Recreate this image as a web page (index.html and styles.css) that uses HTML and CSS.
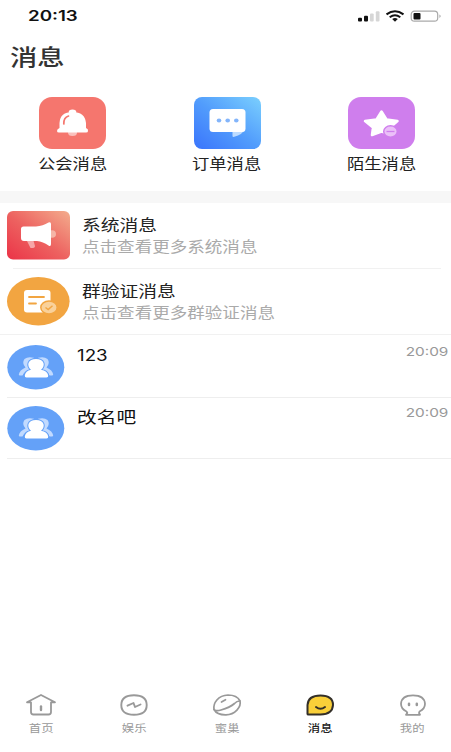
FILE: index.html
```html
<!DOCTYPE html>
<html lang="zh-CN">
<head>
<meta charset="utf-8">
<title>消息</title>
<link rel="stylesheet" href="styles.css">
</head>
<body>
<div class="app">
  <header class="status">
    <span class="wide clock">20:13</span>
    <svg class="signals" width="86" height="14" viewBox="0 0 86 14">
      <rect x="1" y="8.7" width="4" height="3.8" rx="1" fill="#111"/>
      <rect x="7" y="6.8" width="4" height="5.7" rx="1" fill="#111"/>
      <rect x="13" y="4.5" width="3.7" height="8" rx="1" fill="#d6d6d6"/>
      <rect x="18.8" y="2.2" width="3.7" height="10.3" rx="1" fill="#d6d6d6"/>
      <g fill="none" stroke="#111" stroke-width="2">
        <path d="M29.5 5.4Q38 -.8 46.5 5.4"/>
        <path d="M32.7 8.2Q38 4.2 43.3 8.2"/>
      </g>
      <path d="M35.2 9.9Q38 7.9 40.8 9.9L38 12.7Z" fill="#111"/>
      <rect x="54.2" y="2.2" width="26.5" height="10" rx="3.2" fill="#fff" stroke="#aaa" stroke-width="1.2"/>
      <rect x="56.5" y="4" width="7" height="6.5" rx="1" fill="#111"/>
      <path d="M82.5 5.5Q84.7 7.2 82.5 9Z" fill="#999"/>
    </svg>
  </header>
  <h1><span class="wide">消息</span></h1>
  <nav class="shortcuts">
    <a class="shortcut">
      <svg width="67" height="52" viewBox="0 0 67 52">
        <rect width="67" height="52" rx="13" fill="#f5766e"/>
        <ellipse cx="33.5" cy="15" rx="3.8" ry="2.5" fill="#fff"/>
        <ellipse cx="33.5" cy="35.5" rx="4.5" ry="3.5" fill="#fac1bd"/>
        <path d="M20.5 31V26Q21 15 33.5 15T47 26V31Q49.5 32 49 34Q49 35.5 47 35.5H20Q18 35.5 18 34Q18 32 20.5 31Z" fill="#fff"/>
        <path d="M24.8 27Q24.5 20.5 29.5 19" fill="none" stroke="#f5766e" stroke-width="1.7" stroke-linecap="round"/>
      </svg>
      <span class="wide">公会消息</span>
    </a>
    <a class="shortcut">
      <svg width="67" height="52" viewBox="0 0 67 52">
        <defs><linearGradient id="blue" x1="0" y1="1" x2="1" y2="0"><stop offset=".05" stop-color="#3c78fc"/><stop offset=".5" stop-color="#529dfc"/><stop offset="1" stop-color="#7bd0fe"/></linearGradient></defs>
        <rect width="67" height="52" rx="8" fill="url(#blue)"/>
        <path d="M38.5 32H51Q49.5 37 39.5 40Q38.5 40 38.5 39Z" fill="#bddcff"/>
        <rect x="15.5" y="12" width="36" height="23" rx="3.5" fill="#fff"/>
        <g fill="#83b5fb"><ellipse cx="25" cy="23.5" rx="2.3" ry="1.9"/><ellipse cx="33.7" cy="23.5" rx="2.3" ry="1.9"/><ellipse cx="42.3" cy="23.5" rx="2.3" ry="1.9"/></g>
      </svg>
      <span class="wide">订单消息</span>
    </a>
    <a class="shortcut">
      <svg width="67" height="52" viewBox="0 0 67 52">
        <rect width="67" height="52" rx="13" fill="#cf7eed"/>
        <path d="M33.5 14.5L38.5 22.5L49.5 24L42 30.5L41.5 37L33.5 34.5L24 38L25 30.5L17 24L28.5 22.5Z" fill="#fff" stroke="#fff" stroke-width="2.5" stroke-linejoin="round"/>
        <ellipse cx="42.5" cy="34.5" rx="6.8" ry="5.7" fill="#ebc0f8" stroke="#cf7eed" stroke-width="1.5"/>
        <path d="M38.5 34.5H46.5" stroke="#cf7eed" stroke-width="1.3"/>
      </svg>
      <span class="wide">陌生消息</span>
    </a>
  </nav>
  <div class="band"></div>
  <main>
    <section class="notice inset">
      <svg width="63" height="49" viewBox="0 0 63 49">
        <defs><linearGradient id="red" x1="0" y1="1" x2="1" y2="0"><stop offset="0" stop-color="#eb3347"/><stop offset=".48" stop-color="#ed6260"/><stop offset="1" stop-color="#f3ad8d"/></linearGradient></defs>
        <rect width="63" height="48.5" rx="6" fill="url(#red)"/>
        <ellipse cx="45" cy="23" rx="4" ry="3.8" fill="#f5b5a7"/>
        <path d="M19 28H26L28 35Q28 37.5 23.5 37Z" fill="#f6a7a8"/>
        <path d="M16.5 15.5H29Q36 15 41.5 11.5Q44 10.5 44 13V33Q44 36 41.5 34.5Q36 30.5 30 30H17Q14 30 14 27V18Q14 15.5 16.5 15.5Z" fill="#fff"/>
      </svg>
      <div class="copy"><h2><span class="wide">系统消息</span></h2><p><span class="wide">点击查看更多系统消息</span></p></div>
    </section>
    <section class="notice">
      <svg width="63" height="49" viewBox="0 0 63 49">
        <ellipse cx="31.3" cy="24.2" rx="31.3" ry="24.2" fill="#f2a541"/>
        <rect x="17" y="13" width="26.5" height="22.5" rx="3" fill="#fff"/>
        <path d="M22 20H37M22 26.5H29" stroke="#f2a541" stroke-width="1.8" stroke-linecap="round"/>
        <ellipse cx="42" cy="30.5" rx="8.2" ry="6.5" fill="#f9d19a" stroke="#f2a541" stroke-width="1.5"/>
        <path d="M38.5 30.5L41.2 32.5L45.5 28.8" fill="none" stroke="#f2a541" stroke-width="1.5"/>
      </svg>
      <div class="copy"><h2><span class="wide">群验证消息</span></h2><p><span class="wide">点击查看更多群验证消息</span></p></div>
    </section>
    <section class="chat">
      <svg width="58" height="45" viewBox="0 0 58 45">
        <g id="people">
          <ellipse cx="28.8" cy="22.2" rx="28.5" ry="22.2" fill="#64a1f8"/>
          <path d="M27 12.8Q21 11 17.5 14Q14.5 18 18.5 22.5Q12.500 25 11.800 29.500Q11.800 30.500 13 30.500H15.500Q17.500 26 22.500 24.500L24 18ZM31 12.800Q37 11 40.500 14Q43.500 18 39.500 22.500Q45.500 25 46.200 29.500Q46.200 30.500 45 30.500H42.500Q40.500 26 35.500 24.500L34 18Z" fill="#c1daff"/>
          <path d="M24 24.800Q20.500 21.500 21.500 18Q23 14 29 14T36.500 18Q37.500 21.500 34 24.800Q40.500 26 41.200 30.500Q41.500 32.500 39.500 32.500H19.500Q17.500 32.500 17.800 30.500Q18.500 26 24 24.800Z" fill="#fff" stroke="#64a1f8" stroke-width="2" paint-order="stroke"/>
        </g>
      </svg>
      <h2 class="latin"><span class="wide">123</span></h2>
      <time><span class="wide">20:09</span></time>
    </section>
    <section class="chat second">
      <svg width="58" height="45" viewBox="0 0 58 45"><use href="#people"/></svg>
      <h2><span class="wide">改名吧</span></h2>
      <time><span class="wide">20:09</span></time>
    </section>
  </main>
  <footer class="tabs">
    <a class="tab">
      <svg width="32" height="24" viewBox="0 0 32 24" fill="none" stroke="#999" stroke-width="1.8" stroke-linecap="round" stroke-linejoin="round"><path d="M2 9.3L16 2L30 9.3H26V19Q26 21.5 23.5 21.5H8.5Q6 21.5 6 19V9.3Z"/><path d="M16 13.5V17" stroke-width="2.4"/></svg>
      <span class="wide">首页</span>
    </a>
    <a class="tab">
      <svg width="32" height="24" viewBox="0 0 32 24" fill="none" stroke="#999" stroke-width="1.9" stroke-linecap="round" stroke-linejoin="round"><path d="M16 2.2Q28.7 2.2 28.7 12T16 21.8T3.3 12T16 2.2Z"/><path d="M9.5 12.7L15.5 10L17 14L22.5 11.5"/></svg>
      <span class="wide">娱乐</span>
    </a>
    <a class="tab">
      <svg width="32" height="24" viewBox="0 0 32 24" fill="none" stroke="#999" stroke-width="1.7" stroke-linecap="round" stroke-linejoin="round"><path d="M3 16.5C2 10 7 2.5 17 2Q26 2 29 8C30.5 14 24 21.5 15 21.8Q6 22 3 16.5Z"/><path d="M3 16.5Q5 18.5 10 17Q19 14.5 23.5 10.5Q26 7.8 29 8M10.5 9L14.5 6.7"/></svg>
      <span class="wide">蜜巢</span>
    </a>
    <a class="tab active">
      <svg width="32" height="24" viewBox="0 0 32 24" fill="none" stroke="#332f28" stroke-width="2" stroke-linecap="round" stroke-linejoin="round"><path d="M3.5 21V12Q4 2.5 16.5 2.5T29 12Q28.5 21.5 16.5 21.5H4.5Q3.5 21.5 3.5 21Z" fill="#f9cf39"/><path d="M12 14Q16.5 17.5 21 14"/></svg>
      <span class="wide">消息</span>
    </a>
    <a class="tab">
      <svg width="32" height="24" viewBox="0 0 32 24" fill="none" stroke="#999" stroke-width="1.8" stroke-linecap="round" stroke-linejoin="round"><path d="M9.5 18.5Q4 16 4 10.8Q4.500 2.300 16 2.300T28 10.800Q28 16 22.500 18.500L22 20L23 21.800H9L10.300 20Z"/><path d="M12 10.800V12M19.800 10.800V12" stroke-width="2.500"/></svg>
      <span class="wide">我的</span>
    </a>
  </footer>
</div>
</body>
</html>
```
FILE: styles.css
```css
* { box-sizing: border-box; }
body, h1, h2, p { margin: 0; font-weight: 400; }
body { background: #fff; font-family: "Noto Sans CJK SC", sans-serif; color: #222; }
svg { display: block; flex: none; }
.app { width: 451px; height: 752px; display: flex; flex-direction: column; overflow: hidden; }
.wide { display: inline-block; transform: scaleX(1.21); transform-origin: left center; white-space: nowrap; }

.status { height: 32px; display: flex; align-items: center; justify-content: space-between; padding: 0 8px 0 28px; }
.clock { font: 600 14.5px/20px Inter, sans-serif; color: #111; transform: scaleX(1.29); }
h1 { height: 50px; padding-left: 10px; font-size: 22px; line-height: 46px; font-weight: 500; color: #333; }
h1 .wide { transform: scaleX(1.24); }

.shortcuts { height: 109px; padding: 15px 32px 0 35px; display: flex; justify-content: space-between; }
.shortcut { width: 75px; display: flex; flex-direction: column; align-items: center; font-size: 14.3px; line-height: 20px; gap: 4px; }
.shortcut .wide, .tab .wide { transform-origin: center; }
.band { height: 12px; background: #f7f7f7; }

.notice { height: 66px; padding: 8px 0 0 7px; display: flex; gap: 12px; border-bottom: 1px solid #f1f1f1; }
.notice.inset { border-bottom: 0; background: linear-gradient(#f1f1f1, #f1f1f1) 13px 100% / 428px 1px no-repeat; }
.copy { padding-top: 3px; }
.copy h2 { font-size: 15.5px; line-height: 21px; }
.copy p { font-size: 14.5px; line-height: 21px; color: #aaa; }

.chat { height: 62.5px; margin-left: 7px; padding: 10px 3px 0 0; display: flex; border-bottom: 1px solid #eee; }
.chat.second { height: 61.5px; padding-top: 8.5px; }
.chat h2 { flex: 1; margin-left: 12px; font-size: 16.3px; line-height: 20px; color: #111; }
.chat .latin { font: 400 15.5px/22px Inter, sans-serif; }
.chat time { font: 400 12px/14px Inter, sans-serif; color: #999; }
.chat time .wide { transform: scaleX(1.28); transform-origin: right center; }

.tabs { margin: auto 0 0 -5px; height: 59px; display: grid; grid-template-columns: repeat(5, 92.8px); }
.tab { display: flex; flex-direction: column; align-items: center; gap: 4px; font-size: 10.2px; line-height: 14px; color: #999; }
.active { color: #222; font-weight: 500; }
```
